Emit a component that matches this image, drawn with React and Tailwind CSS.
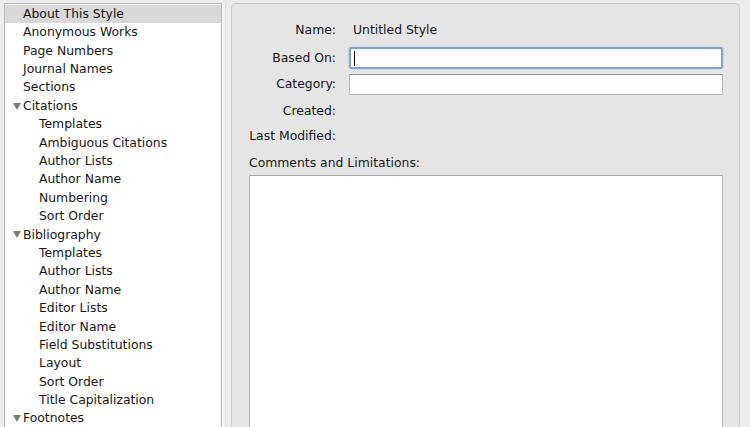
import React from "react";

const items = [
  { label: "About This Style", level: 0, selected: true },
  { label: "Anonymous Works", level: 0 },
  { label: "Page Numbers", level: 0 },
  { label: "Journal Names", level: 0 },
  { label: "Sections", level: 0 },
  { label: "Citations", level: 0, open: true },
  { label: "Templates", level: 1 },
  { label: "Ambiguous Citations", level: 1 },
  { label: "Author Lists", level: 1 },
  { label: "Author Name", level: 1 },
  { label: "Numbering", level: 1 },
  { label: "Sort Order", level: 1 },
  { label: "Bibliography", level: 0, open: true },
  { label: "Templates", level: 1 },
  { label: "Author Lists", level: 1 },
  { label: "Author Name", level: 1 },
  { label: "Editor Lists", level: 1 },
  { label: "Editor Name", level: 1 },
  { label: "Field Substitutions", level: 1 },
  { label: "Layout", level: 1 },
  { label: "Sort Order", level: 1 },
  { label: "Title Capitalization", level: 1 },
  { label: "Footnotes", level: 0, open: true },
];

const Triangle = () => (
  <svg width="8" height="7" viewBox="0 0 8 7" className="shrink-0">
    <polygon points="0,0 8,0 4,7" fill="#7a7a7a" />
  </svg>
);

const Row = ({ item }) => (
  <div
    className={`flex items-center h-[18.4px] ${
      item.selected ? "bg-[#d8d8d8]" : ""
    } ${item.level === 1 ? "pl-[34px]" : item.open ? "pl-[8px]" : "pl-[18px]"}`}
  >
    {item.open && (
      <span className="mr-[2px] flex items-center">
        <Triangle />
      </span>
    )}
    <span className="whitespace-nowrap">{item.label}</span>
  </div>
);

export default function App() {
  return (
    <div
      className="w-[750px] h-[427px] overflow-hidden bg-[#ececec] flex pt-[3px] pl-[4px] text-[#161616] text-[12.4px]"
      style={{ fontFamily: '"Lucida Grande", "DejaVu Sans", sans-serif' }}
    >
      {/* source list */}
      <div className="w-[218px] shrink-0 bg-white border border-b-0 border-[#b9b9b9] pt-[1px]">
        {items.map((item, i) => (
          <Row key={i} item={item} />
        ))}
      </div>

      {/* splitter */}
      <div className="w-[9px] shrink-0 flex">
        <div className="w-[3px] bg-[#f4f4f4]" />
        <div className="w-[1px] bg-[#dadada]" />
      </div>

      {/* form panel */}
      <div className="w-[509px] shrink-0 rounded-t-[5px] border border-b-0 border-[#c9c9c9] bg-[#e5e5e5] pl-[17px] pr-[16px] pt-[17px]">
        <div className="flex items-center h-[18px]">
          <div className="w-[87px] text-right">Name:</div>
          <div className="ml-[17px]">Untitled Style</div>
        </div>

        <div className="flex items-center h-[22px] mt-[8px]">
          <div className="w-[87px] text-right">Based On:</div>
          <div className="ml-[13px] flex-1 h-[22px] bg-white border-2 border-[#7fa6d3] rounded-[2px] flex items-center pl-[3px] shadow-[0_0_2px_#9dbde3]">
            <div className="w-[1px] h-[15px] bg-black" />
          </div>
        </div>

        <div className="flex items-center h-[21px] mt-[5px]">
          <div className="w-[87px] text-right">Category:</div>
          <div className="ml-[13px] flex-1 h-[21px] bg-white border border-[#b9b9b9] border-t-[#9c9c9c]" />
        </div>

        <div className="flex items-center h-[18px] mt-[7px]">
          <div className="w-[87px] text-right">Created:</div>
        </div>

        <div className="flex items-center h-[18px] mt-[7px]">
          <div className="w-[87px] text-right whitespace-nowrap">Last Modified:</div>
        </div>

        <div className="flex items-center h-[18px] mt-[9px]">
          <div className="whitespace-nowrap">Comments and Limitations:</div>
        </div>

        <div className="mt-[3px] h-[300px] bg-white border border-[#b9b9b9] border-t-[#a5a5a5]" />
      </div>
    </div>
  );
}
